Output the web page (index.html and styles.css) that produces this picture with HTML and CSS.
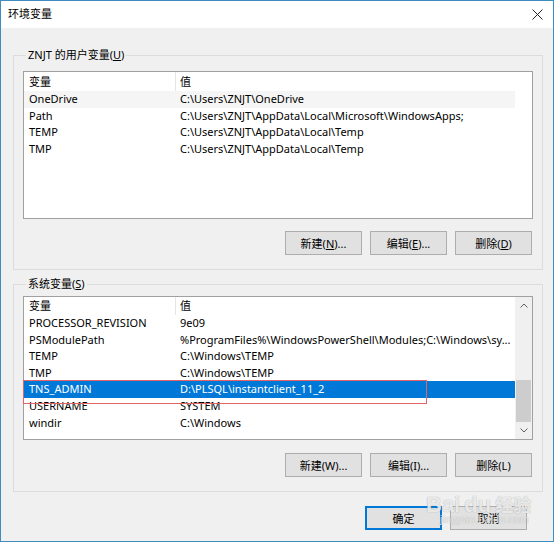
FILE: index.html
```html
<!DOCTYPE html>
<html lang="zh-CN">
<head>
<meta charset="utf-8">
<title>环境变量</title>
<link rel="stylesheet" href="styles.css">
</head>
<body>
<div class="window">
  <div class="titlebar">
    <span class="title">环境变量</span>
    <svg class="close" width="11" height="11" viewBox="0 0 11 11"><path d="M0.5 0.5 L10.5 10.5 M10.5 0.5 L0.5 10.5" stroke="#222" stroke-width="1" fill="none"/></svg>
  </div>
  <div class="content">
    <section class="group group-user">
      <div class="group-title">ZNJT 的用户变量(<u>U</u>)</div>
      <div class="list list-user">
        <div class="rows">
          <div class="row header"><span class="c1">变量</span><span class="c2">值</span></div>
          <div class="row soft"><span class="c1">OneDrive</span><span class="c2">C:\Users\ZNJT\OneDrive</span></div>
          <div class="row"><span class="c1">Path</span><span class="c2">C:\Users\ZNJT\AppData\Local\Microsoft\WindowsApps;</span></div>
          <div class="row"><span class="c1">TEMP</span><span class="c2">C:\Users\ZNJT\AppData\Local\Temp</span></div>
          <div class="row"><span class="c1">TMP</span><span class="c2">C:\Users\ZNJT\AppData\Local\Temp</span></div>
        </div>
      </div>
      <div class="btnrow">
        <button class="btn">新建(<u>N</u>)...</button>
        <button class="btn">编辑(<u>E</u>)...</button>
        <button class="btn">删除(<u>D</u>)</button>
      </div>
    </section>

    <section class="group group-sys">
      <div class="group-title">系统变量(<u>S</u>)</div>
      <div class="list list-sys">
        <div class="rows">
          <div class="row header"><span class="c1">变量</span><span class="c2">值</span></div>
          <div class="row"><span class="c1">PROCESSOR_REVISION</span><span class="c2">9e09</span></div>
          <div class="row"><span class="c1">PSModulePath</span><span class="c2">%ProgramFiles%\WindowsPowerShell\Modules;C:\Windows\sy...</span></div>
          <div class="row"><span class="c1">TEMP</span><span class="c2">C:\Windows\TEMP</span></div>
          <div class="row"><span class="c1">TMP</span><span class="c2">C:\Windows\TEMP</span></div>
          <div class="row selected"><span class="c1">TNS_ADMIN</span><span class="c2">D:\PLSQL\instantclient_11_2</span></div>
          <div class="row"><span class="c1">USERNAME</span><span class="c2">SYSTEM</span></div>
          <div class="row"><span class="c1">windir</span><span class="c2">C:\Windows</span></div>
        </div>
        <div class="scrollbar">
          <div class="sb-btn"><svg width="8" height="5" viewBox="0 0 8 5"><path d="M0.5 4.5 L4 1 L7.5 4.5" stroke="#606060" fill="none"/></svg></div>
          <div class="sb-track"><div class="sb-thumb"></div></div>
          <div class="sb-btn"><svg width="8" height="5" viewBox="0 0 8 5"><path d="M0.5 0.5 L4 4 L7.5 0.5" stroke="#606060" fill="none"/></svg></div>
        </div>
        <div class="mark"></div>
      </div>
      <div class="btnrow">
        <button class="btn">新建(W)...</button>
        <button class="btn">编辑(I)...</button>
        <button class="btn">删除(L)</button>
      </div>
    </section>

    <div class="footer">
      <button class="btn default">确定</button>
      <button class="btn">取消</button>
    </div>
  </div>
  <div class="watermark">
    <span class="wm-big">Bai</span><span class="wm-big">du</span><span class="wm-cn">经验</span>
    <span class="wm-url">jingyan.baidu.com</span>
  </div>
</div>
</body>
</html>
```

FILE: styles.css
```css
* { box-sizing: border-box; }

body {
  margin: 0;
  font-family: "Noto Sans", "Noto Sans CJK SC", sans-serif;
  font-size: 11px;
  color: #000;
  background: #fff;
}

.window {
  width: 554px;
  height: 542px;
  border: 1px solid #3e8cc0;
  background: #f0f0f0;
  display: flex;
  flex-direction: column;
  position: relative;
  overflow: hidden;
}

.titlebar {
  flex: none;
  height: 27px;
  background: #fff;
  display: flex;
  align-items: center;
  justify-content: space-between;
  padding: 0 10px 0 7px;
}

.title {
  font-size: 11px;
  margin-bottom: 3px;
}

.close { margin-bottom: 1px; }

.content {
  display: flex;
  flex-direction: column;
  padding: 27px 10px 0 12px;
}

.group {
  border: 1px solid #dcdcdc;
  padding: 0 9px 14px;
  display: flex;
  flex-direction: column;
}

.group-sys { margin-top: 14px; }

.group-title {
  align-self: flex-start;
  margin: -9px 0 0 3px;
  padding: 0 2px;
  height: 16px;
  line-height: 16px;
  background: #f0f0f0;
}

.list {
  border: 1px solid #a0a0a0;
  background: #fff;
  display: flex;
  position: relative;
}

.list-user { height: 148px; margin-top: 8px; }
.list-sys { height: 144px; margin-top: 4px; }

.rows {
  width: 491px;
  flex: none;
  display: flex;
  flex-direction: column;
}

.row {
  display: flex;
  height: 16.6px;
  line-height: 16.6px;
  white-space: nowrap;
}

.row.header {
  height: 19px;
  line-height: 19px;
}

.list-sys .row.header {
  height: 18px;
  line-height: 18px;
}

.row.header .c1 { border-right: 1px solid #e5e5e5; }

.row.soft { background: #f5f5f5; }

.row.selected {
  background: #0078d7;
  color: #fff;
}

.c1 {
  flex: none;
  width: 152px;
  padding-left: 5px;
}

.c2 {
  flex: 1;
  padding-left: 4px;
  overflow: hidden;
}

.scrollbar {
  flex: 1;
  background: #f0f0f0;
  display: flex;
  flex-direction: column;
}

.sb-btn {
  height: 17px;
  flex: none;
  display: flex;
  align-items: center;
  justify-content: center;
}

.sb-track {
  flex: 1;
  display: flex;
  flex-direction: column;
  justify-content: flex-end;
}

.sb-thumb {
  height: 42px;
  margin: 0 1px;
  background: #cdcdcd;
}

.mark {
  position: absolute;
  left: -1px;
  top: 83px;
  width: 404px;
  height: 24px;
  border: 1px solid #e06666;
}

.btnrow {
  display: flex;
  justify-content: flex-end;
  gap: 8px;
  margin-top: 12px;
  padding-right: 1px;
}

.group-sys .btnrow { margin-top: 13px; }

.btn {
  width: 77px;
  height: 24px;
  padding: 0;
  border: 1px solid #adadad;
  background: #e1e1e1;
  font: inherit;
  color: #000;
}

.btn.default {
  border-color: #0078d7;
  box-shadow: inset 0 0 0 1px #0078d7;
}

.footer {
  display: flex;
  justify-content: flex-end;
  gap: 8px;
  margin-top: 14px;
  padding-right: 16px;
}

.watermark {
  position: absolute;
  left: 425px;
  top: 490px;
  width: 110px;
  height: 46px;
  color: rgba(255, 255, 255, 0.8);
  font-family: "Liberation Sans", "Noto Sans CJK SC", sans-serif;
  text-shadow: 0 0 1px rgba(110, 110, 110, 0.7);
  pointer-events: none;
}

.wm-big {
  font-size: 22px;
  font-weight: bold;
  margin-right: 4px;
}

.wm-cn {
  font-size: 18px;
  font-weight: bold;
}

.wm-url {
  display: block;
  margin-top: -4px;
  padding-left: 14px;
  font-size: 10px;
  letter-spacing: 0.5px;
}
```
